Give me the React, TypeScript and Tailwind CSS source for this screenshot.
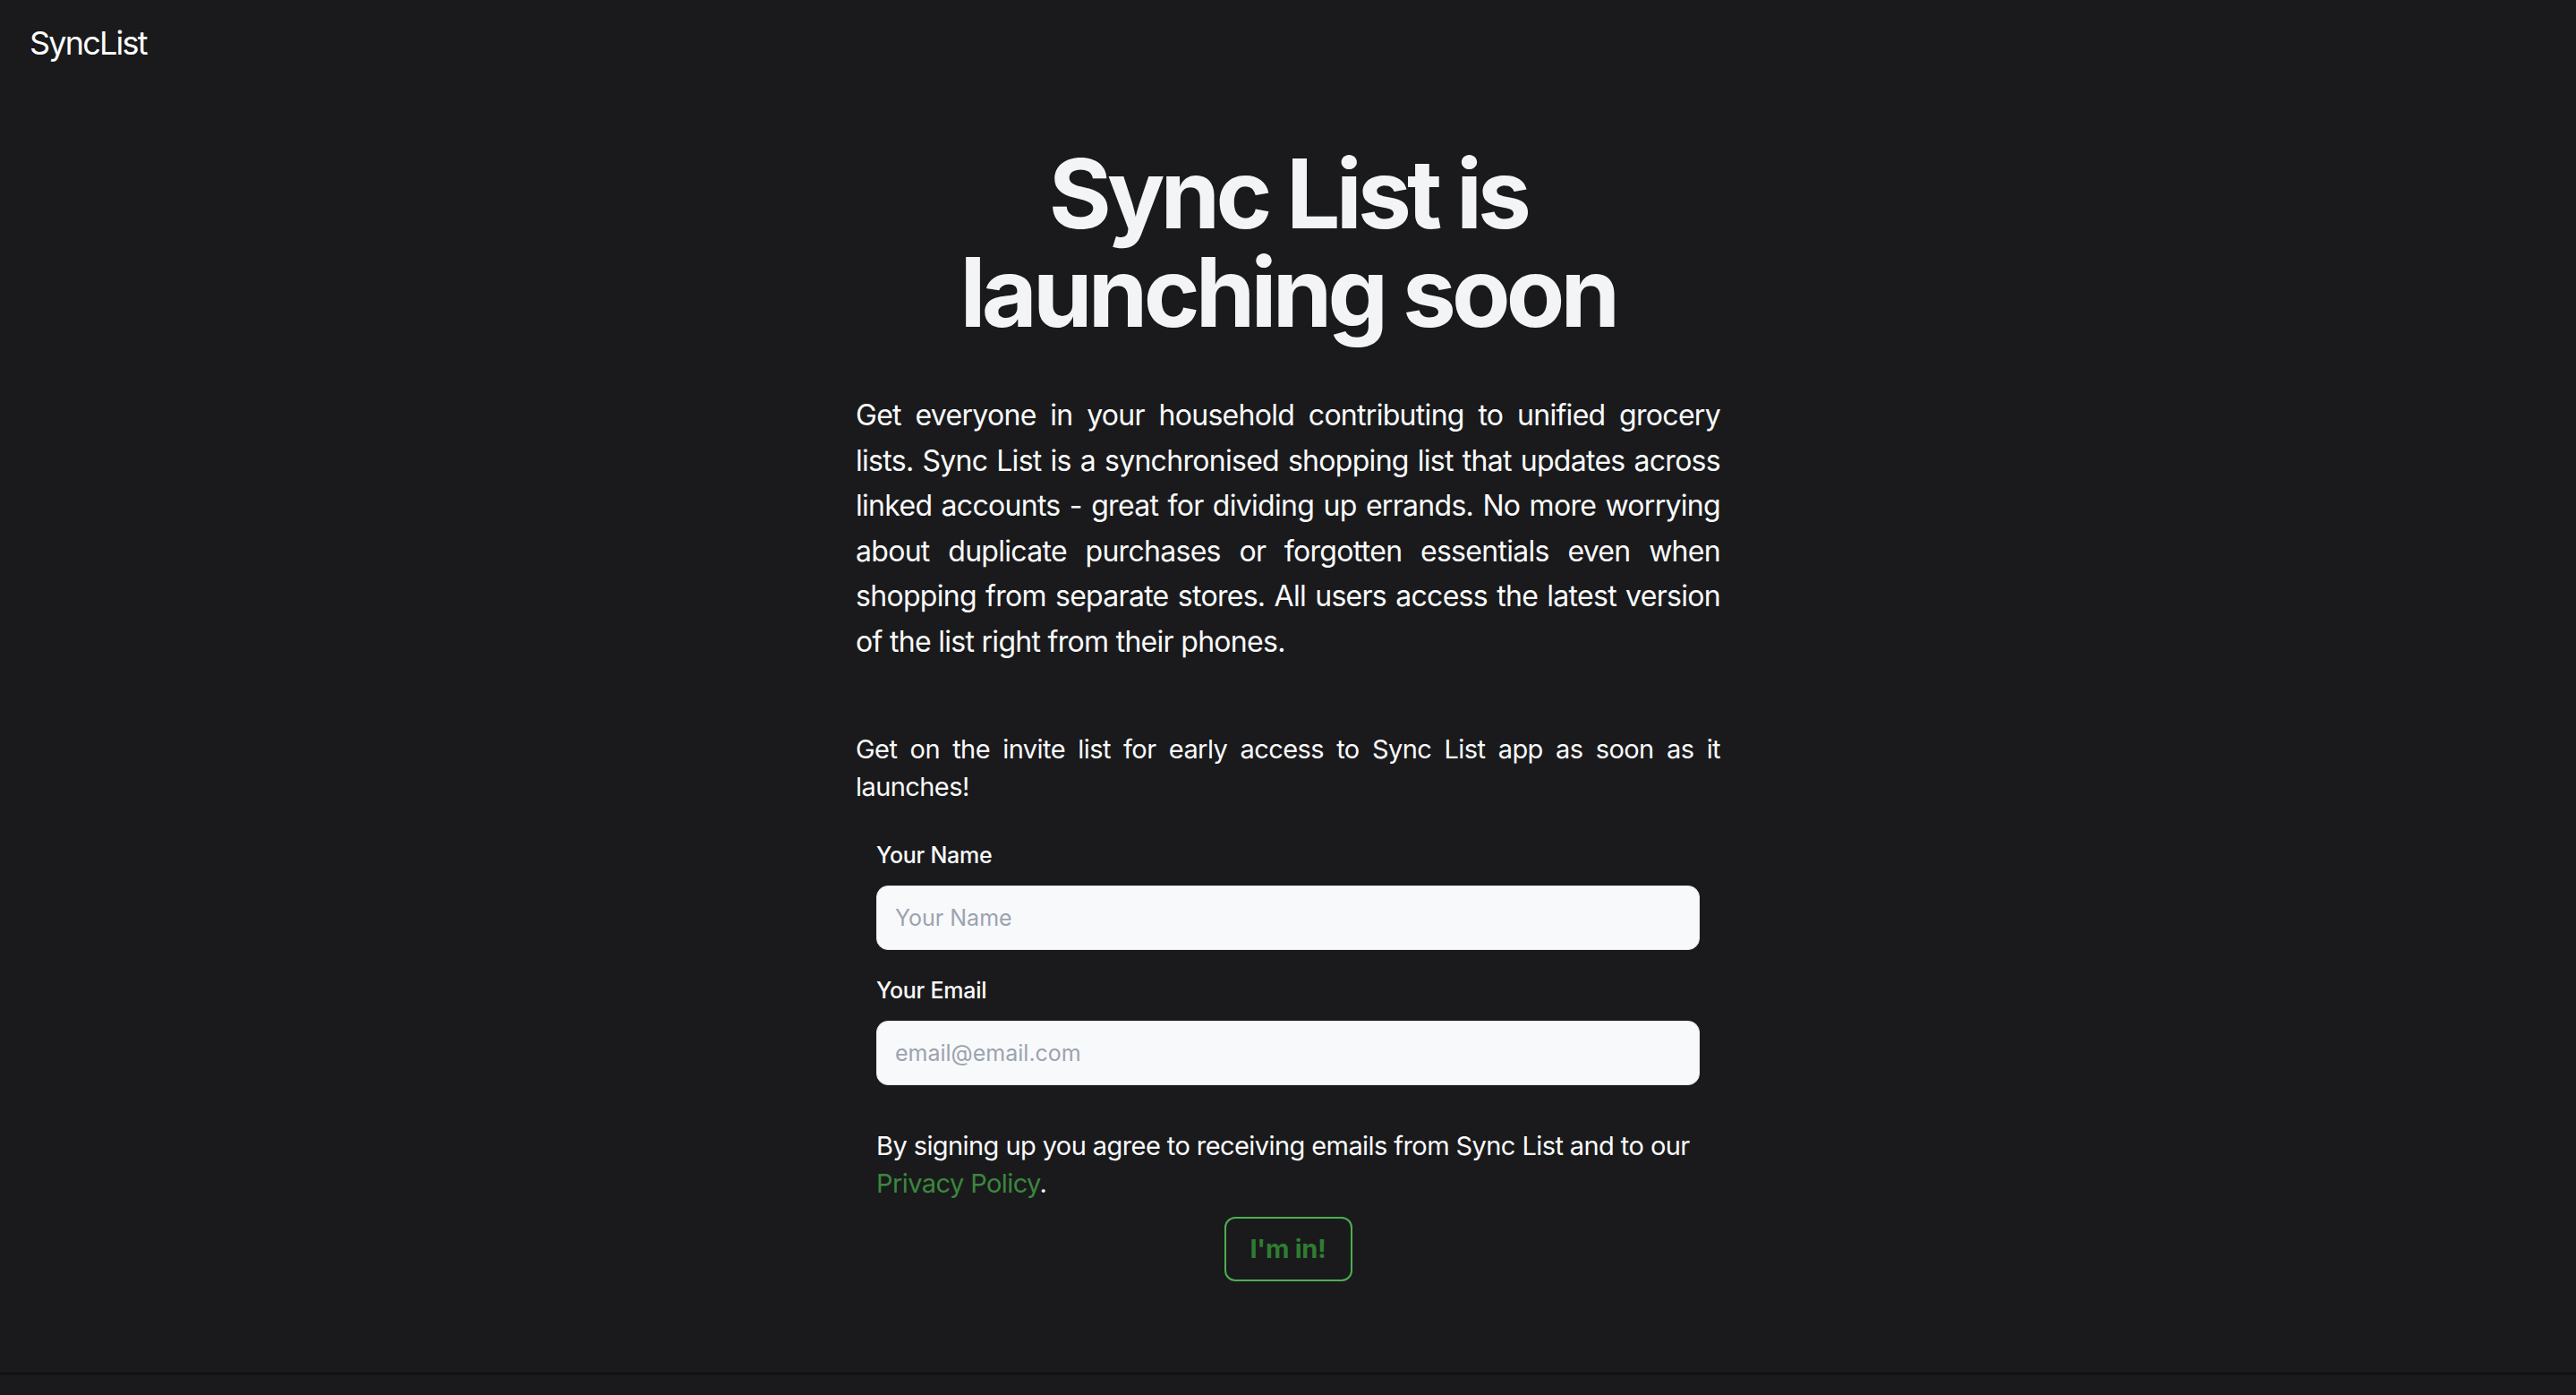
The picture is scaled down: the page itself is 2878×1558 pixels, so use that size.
import React from "react";

export default function App() {
  return (
    <div className="min-h-screen flex flex-col bg-[#1a1a1c] text-[#f9fafb] font-['Inter','Liberation_Sans',sans-serif]">
      <header className="px-[33px] pt-[21px] text-[36px] leading-[54px] tracking-[-0.05em] text-white">
        SyncList
      </header>

      <main className="flex-1 flex justify-center">
        <div className="w-[966px] pb-[100px]">
          <h1 className="mt-[86px] text-center text-[107px] leading-[110px] font-bold tracking-[-0.045em] text-[#f3f4f6]">
            Sync List is
            <br />
            launching soon
          </h1>

          <p className="mt-[58px] text-[32px] leading-[50.5px] tracking-[-0.022em] text-justify">
            Get everyone in your household contributing to unified grocery lists. Sync List is a
            synchronised shopping list that updates across linked accounts - great for dividing up
            errands. No more worrying about duplicate purchases or forgotten essentials even when
            shopping from separate stores. All users access the latest version of the list right
            from their phones.
          </p>

          <p className="mt-[74px] text-[29px] leading-[42px] tracking-[-0.02em] text-justify">
            Get on the invite list for early access to Sync List app as soon as it launches!
          </p>

          <form className="mt-[37px] px-[23px]" onSubmit={(e) => e.preventDefault()}>
            <label className="block text-[25px] leading-[36px] font-medium tracking-[-0.01em]">Your Name</label>
            <input
              type="text"
              placeholder="Your Name"
              className="mt-[16px] block w-full h-[72px] rounded-[13px] border border-[#e5e7eb] bg-[#f8f9fb] px-[20px] text-[25px] text-gray-900 placeholder:text-[#9ca3af] outline-none"
            />

            <label className="mt-[27px] block text-[25px] leading-[36px] font-medium tracking-[-0.01em]">Your Email</label>
            <input
              type="email"
              placeholder="email@email.com"
              className="mt-[16px] block w-full h-[72px] rounded-[13px] border border-[#e5e7eb] bg-[#f8f9fb] px-[20px] text-[25px] text-gray-900 placeholder:text-[#9ca3af] outline-none"
            />

            <p className="mt-[47px] text-[29px] leading-[42px] tracking-[-0.02em]">
              By signing up you agree to receiving emails from Sync List and to our{" "}
              <a href="#" className="text-[#3a873d]">Privacy Policy</a>.
            </p>

            <div className="mt-[16px] flex justify-center">
              <button
                type="submit"
                className="w-[143px] h-[72px] rounded-[12px] border-2 border-[#4caf50] text-[29px] font-bold tracking-[-0.01em] text-[#2e7d32]"
              >
                I'm in!
              </button>
            </div>
          </form>
        </div>
      </main>

      <footer className="h-[25px] border-t-2 border-[#0e0e0f]" />
    </div>
  );
}
